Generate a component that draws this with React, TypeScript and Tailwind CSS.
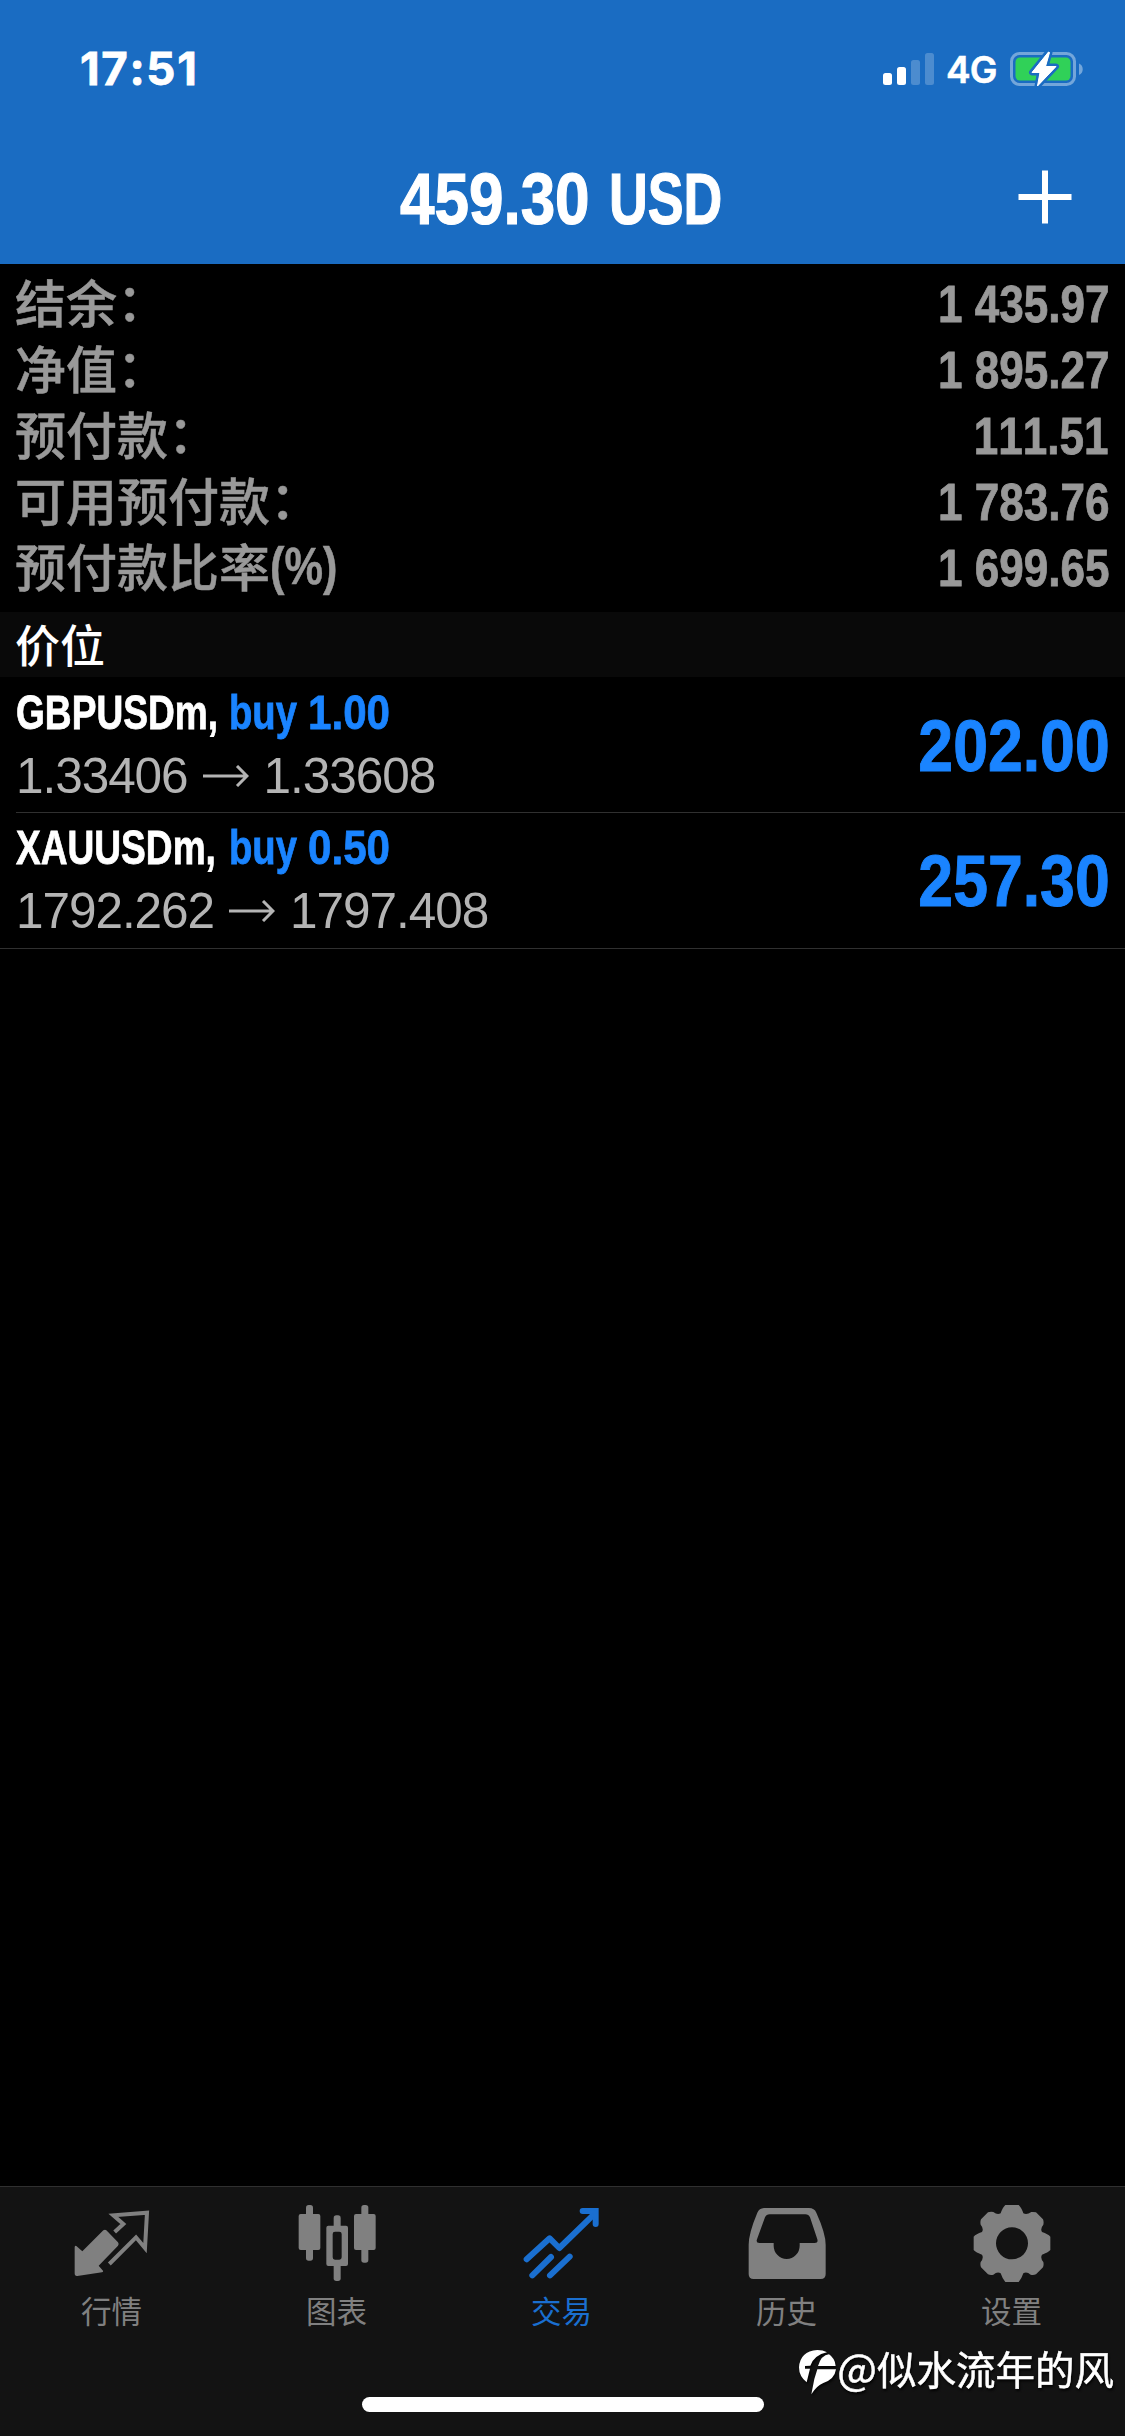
import React from "react";

const summary = [
  { label: "结余", colon: true, value: "1 435.97" },
  { label: "净值", colon: true, value: "1 895.27" },
  { label: "预付款", colon: true, value: "111.51" },
  { label: "可用预付款", colon: true, value: "1 783.76" },
  { label: "预付款比率", colon: false, value: "1 699.65" },
];

const positions = [
  { symbol: "GBPUSDm,", volume: "1.00", open: "1.33406", current: "1.33608", profit: "202.00" },
  { symbol: "XAUUSDm,", volume: "0.50", open: "1792.262", current: "1797.408", profit: "257.30" },
];

const SignalIcon = () => (
  <svg className="w-[52px] h-[34px]" viewBox="0 0 52 34" fill="white">
    <rect x="0" y="21" width="9" height="12" rx="2.5" />
    <rect x="14" y="15" width="9" height="18" rx="2.5" />
    <rect x="28" y="8" width="9" height="25" rx="2.5" opacity="0.22" />
    <rect x="42" y="1" width="9" height="32" rx="2.5" opacity="0.22" />
  </svg>
);

const BatteryIcon = () => (
  <svg className="w-[74px] h-[38px]" viewBox="0 0 74 38">
    <rect x="1.5" y="3.5" width="63" height="31" rx="8" fill="none" stroke="#73a6da" strokeWidth="3" />
    <path d="M69 13.5c5 2 5 9.500 0 11.500z" fill="#73a6da" />
    <rect x="5.5" y="7.5" width="55" height="23" rx="4.500" fill="#30d158" />
    <path
      d="M38.500 2L22 22.500h8L27.500 36 46 16.500H35.500L39.500 2.500z"
      fill="white"
      stroke="#1a6cc2"
      strokeWidth="6"
      strokeLinejoin="round"
      paintOrder="stroke"
    />
    <path
      d="M38.500 2L22 22.500h8L27.500 36 46 16.500H35.500L39.500 2.500z"
      fill="white"
      stroke="white"
      strokeWidth="1"
      strokeLinejoin="round"
    />
  </svg>
);

const QuotesIcon = () => (
  <svg className="w-[90px] h-[90px]" viewBox="202 90 270 270">
    <path
      d="M230 228l18 16 63-63q5-4 9 0l35 36q4 5 0 10l-58 60 13 15q2 4-3 5l-74 11q-8 1-8-8v-78q0-6 5-4z"
      fill="currentColor"
    />
    <path
      d="M345 186l26-24-30-26 101-8-6 106-27-32-80 80"
      fill="none"
      stroke="currentColor"
      strokeWidth="12"
    />
  </svg>
);

const ChartIcon = () => (
  <svg className="w-[90px] h-[90px]" viewBox="877 90 270 270" fill="currentColor">
    <rect x="919" y="105" width="21" height="167" rx="8" />
    <rect x="897" y="132" width="65" height="108" rx="6" />
    <rect x="1002" y="136" width="21" height="40" rx="8" />
    <rect x="1002" y="276" width="21" height="57" rx="8" />
    <path
      fillRule="evenodd"
      d="M986 167h53q6 0 6 6v109q0 6-6 6h-53q-6 0-6-6V173q0-6 6-6zM1006 185q-7 0-7 7v70q0 7 7 7h13q7 0 7-7v-70q0-7-7-7z"
    />
    <rect x="1085" y="105" width="21" height="173" rx="8" />
    <rect x="1063" y="132" width="65" height="108" rx="6" />
  </svg>
);

const TradeIcon = () => (
  <svg
    className="w-[90px] h-[90px]"
    viewBox="352 90 270 270"
    fill="none"
    stroke="currentColor"
    strokeWidth="18"
    strokeLinecap="round"
  >
    <path d="M381 268l69-63 29 29 100-97" strokeLinejoin="round" />
    <path d="M549 123h39v39" strokeLinejoin="miter" />
    <path d="M567 124l20 20v-18z" strokeWidth="8" fill="currentColor" />
    <path d="M398 316l56-55M451 316l59-56" />
  </svg>
);

const HistoryIcon = () => (
  <svg className="w-[90px] h-[90px]" viewBox="67 90 270 270">
    <path
      fill="currentColor"
      fillRule="evenodd"
      d="M135 114h133q16 0 22 14 28 62 28 96v88q0 15-15 15H102q-15 0-15-15v-88q0-34 26-96 6-14 22-14zM150 133q-10 0-14 9l-24 66q-4 11 7 11h43v8a39 40 0 0 0 78 0v-8h45q11 0 8-11l-22-66q-4-9-14-9z"
    />
  </svg>
);

const SettingsIcon = () => (
  <svg className="w-[90px] h-[90px]" viewBox="-135 -130 270 270" fill="currentColor">
    <path
      fillRule="evenodd"
      d="M-20-115H20Q28-108 34-90Q44-84 58-94Q66-95 72-93L93-72Q96-64 94-56Q84-44 90-34Q108-28 115-20V20Q108 28 90 34Q84 44 94 56Q96 64 93 72L72 93Q64 96 56 94Q44 84 34 90Q28 108 20 116H-20Q-28 108-34 90Q-44 84-56 94Q-64 96-72 93L-93 72Q-96 64-94 56Q-84 44-90 34Q-108 28-115 20V-20Q-108-28-90-34Q-84-44-94-56Q-96-64-93-72L-72-93Q-64-96-56-94Q-44-84-34-90Q-28-108-20-115zM0-48a48 48 0 1 0 0 96a48 48 0 1 0 0-96z"
    />
  </svg>
);

const tabs = [
  { label: "行情", icon: <QuotesIcon />, active: false },
  { label: "图表", icon: <ChartIcon />, active: false },
  { label: "交易", icon: <TradeIcon />, active: true },
  { label: "历史", icon: <HistoryIcon />, active: false },
  { label: "设置", icon: <SettingsIcon />, active: false },
];

const App: React.FC = () => {
  return (
    <div className="w-[1125px] h-[2436px] bg-black flex flex-col relative overflow-hidden whitespace-nowrap [font-kerning:none] font-['Liberation_Sans','Noto_Sans_CJK_SC',sans-serif]">
      {/* Status bar and title */}
      <header className="h-[264px] shrink-0 bg-[#1a6cc2] text-white">
        <div className="h-[132px] pt-[6px] pl-[80px] pr-[41px] flex items-center justify-between">
          <span className="font-['Inter',sans-serif] font-bold text-[45.500px] leading-none tracking-[1.700px] [-webkit-text-stroke:0.8px_white]">
            17:51
          </span>
          <div className="flex items-center">
            <SignalIcon />
            <span className="ml-[11px] w-[51px] font-['Inter',sans-serif] font-semibold text-[37px] leading-none tracking-[-1px] [-webkit-text-stroke:0.5px_white]">
              4G
            </span>
            <span className="ml-[13px]">
              <BatteryIcon />
            </span>
          </div>
        </div>
        <div className="h-[132px] pt-[2px] pl-[400px] pr-[52px] flex items-center font-bold text-[72.500px] leading-none [-webkit-text-stroke:1.200px_white]">
          <span className="w-[209px]">
            <span className="inline-block origin-left scale-x-[0.855]">459.30</span>
          </span>
          <span className="w-[120px]">
            <span className="inline-block origin-left scale-x-[0.74]">USD</span>
          </span>
          <svg className="ml-auto mb-[4px] w-[56px] h-[56px]" viewBox="0 0 56 56" stroke="white" strokeWidth="6">
            <path d="M28 1.500v53M1.500 28h53" />
          </svg>
        </div>
      </header>

      {/* Account summary */}
      <section className="pt-[6px] h-[348px] shrink-0 pl-[15px] pr-4 text-[#999999]">
        {summary.map((row) => (
          <div key={row.label} className="h-[66px] flex items-center justify-between">
            <span className="mb-[4px] flex items-center text-[51px] leading-none font-medium font-['Noto_Sans_CJK_SC',sans-serif] [-webkit-text-stroke:0.5px_#999999]">
              {row.label}
              {row.colon ? (
                <span className="relative -top-[2px]">：</span>
              ) : (
                <span className="mt-[3px] inline-block origin-left scale-x-[0.85] font-bold font-['Liberation_Sans',sans-serif]">
                  (%)
                </span>
              )}
            </span>
            <span className="mt-[3px] inline-block origin-right scale-x-[0.855] font-bold text-[51.500px] leading-none [-webkit-text-stroke:0.8px_#999999]">
              {row.value}
            </span>
          </div>
        ))}
      </section>

      {/* Open positions */}
      <h2 className="h-[65px] shrink-0 pl-[15px] pb-[2px] flex items-center bg-[#090909] text-white text-[45px] leading-none font-medium font-['Noto_Sans_CJK_SC',sans-serif]">
        价位
      </h2>
      <ul className="shrink-0 border-b border-[#303030]">
        {positions.map((p, i) => (
          <li key={p.symbol} className="pl-4">
            <div
              className={
                i === 0
                  ? "h-[136px] pr-[15px] flex items-center justify-between border-b border-[#303030]"
                  : "h-[135px] pr-[15px] pb-[2px] flex items-center justify-between"
              }
            >
              <div>
                <div className="flex h-[62px] pb-[3px] items-center font-bold text-[49px] leading-none text-[#1a84ff] [-webkit-text-stroke:0.8px_currentColor]">
                  <span className="w-[213px] text-white">
                    <span className="inline-block origin-left scale-x-[0.757]">{p.symbol}</span>
                  </span>
                  <span className="w-[79px]">
                    <span className="inline-block origin-left scale-x-[0.78]">buy</span>
                  </span>
                  <span className="inline-block origin-left scale-x-[0.86]">{p.volume}</span>
                </div>
                <div className="flex h-[62px] items-center text-[49.500px] leading-none tracking-[-1.050px] text-[#b4b4b4]">
                  {p.open}
                  <svg
                    className="mx-[15px] w-[46px] h-[22px]"
                    viewBox="0 0 46 22"
                    fill="none"
                    stroke="currentColor"
                    strokeWidth="3"
                  >
                    <path d="M0 11h44M34 1l10 10-10 10" />
                  </svg>
                  {p.current}
                </div>
              </div>
              <span className="mt-[5px] inline-block origin-right scale-x-[0.875] font-bold text-[71.500px] leading-none text-[#1a84ff] [-webkit-text-stroke:1px_currentColor]">
                {p.profit}
              </span>
            </div>
          </li>
        ))}
      </ul>

      {/* Tab bar */}
      <nav className="mt-auto h-[250px] shrink-0 grid grid-cols-5 bg-[#131313] border-t border-[#303030]">
        {tabs.map((tab) => (
          <div
            key={tab.label}
            className={
              tab.active
                ? "pt-[13px] pr-[2px] flex flex-col items-center text-[#1a6fd0]"
                : "pt-[13px] pr-[2px] flex flex-col items-center text-[#808080]"
            }
          >
            {tab.icon}
            <span className="mt-[4px] text-[30.500px] leading-[32px] font-['Noto_Sans_CJK_SC',sans-serif]">
              {tab.label}
            </span>
          </div>
        ))}
      </nav>

      {/* Watermark */}
      <div className="absolute right-[11px] bottom-[38px] flex items-center text-white drop-shadow-[1px_2px_1px_rgba(0,0,0,0.8)]">
        <svg className="mt-[5px] w-[38px] h-[46px]" viewBox="234 550 114 138" fill="white">
          <path d="M257 647q-23-18-23-45 3-48 55-52 17 0 29 7-38 8-50 40l-16 1v8h15z" />
          <path d="M291 598q10-33 33-35 18 12 20 35z" />
          <path d="M289 608h56q-4 30-38 41-20 8-36 34l9-46z" />
        </svg>
        <span className="mb-[6px] text-[39.500px] leading-[48px] font-['Noto_Sans_CJK_SC',sans-serif] [-webkit-text-stroke:0.5px_white]">
          <span className="text-[42px]">@</span>似水流年的风
        </span>
      </div>

      {/* Home indicator */}
      <div className="absolute left-[362px] bottom-[24px] w-[402px] h-[15px] rounded-full bg-white" />
    </div>
  );
};

export default App;
